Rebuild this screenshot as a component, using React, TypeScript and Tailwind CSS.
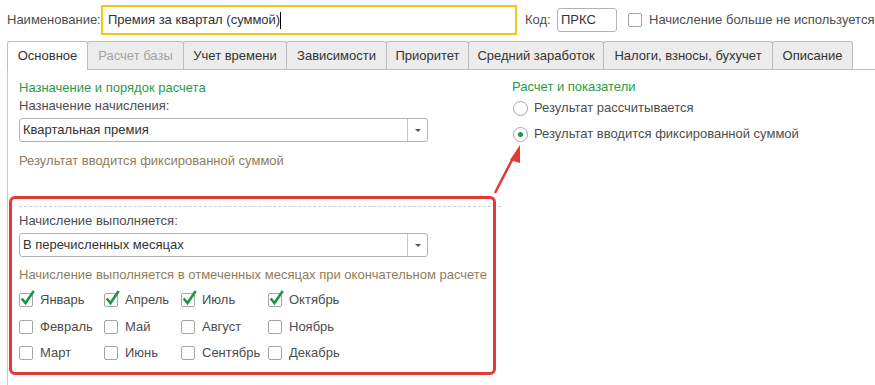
import React from "react";

const TABS = [
  { label: "Основное", w: "w-[81px]", active: true, disabled: false },
  { label: "Расчет базы", w: "w-[97px]", active: false, disabled: true },
  { label: "Учет времени", w: "w-[104px]", active: false, disabled: false },
  { label: "Зависимости", w: "w-[101px]", active: false, disabled: false },
  { label: "Приоритет", w: "w-[83px]", active: false, disabled: false },
  { label: "Средний заработок", w: "w-[136px]", active: false, disabled: false },
  { label: "Налоги, взносы, бухучет", w: "w-[170px]", active: false, disabled: false },
  { label: "Описание", w: "w-[81px]", active: false, disabled: false },
];

// grid fills row by row: Jan, Apr, Jul, Oct / Feb, May, ...
const MONTHS = [
  { name: "Январь", on: true },
  { name: "Апрель", on: true },
  { name: "Июль", on: true },
  { name: "Октябрь", on: true },
  { name: "Февраль", on: false },
  { name: "Май", on: false },
  { name: "Август", on: false },
  { name: "Ноябрь", on: false },
  { name: "Март", on: false },
  { name: "Июнь", on: false },
  { name: "Сентябрь", on: false },
  { name: "Декабрь", on: false },
];

function Checkbox({ checked }: { checked?: boolean }) {
  return (
    <span className="relative block h-[14px] w-[14px] shrink-0 rounded-[2px] border border-[#a6a6a6] bg-white">
      {checked && (
        <svg className="absolute left-0 top-[-4px]" width="15" height="16" viewBox="0 0 15 16">
          <path d="M2.5 9.5 L5.5 13 L13 2" fill="none" stroke="#1e9444" strokeWidth="2.6" strokeLinecap="square" />
        </svg>
      )}
    </span>
  );
}

function Radio({ checked }: { checked?: boolean }) {
  return (
    <span className="flex h-[15px] w-[15px] shrink-0 items-center justify-center rounded-full border border-[#a6a6a6] bg-white">
      {checked && <span className="h-[5px] w-[5px] rounded-full bg-[#1e9444]" />}
    </span>
  );
}

function Select({ value }: { value: string }) {
  return (
    <div className="flex h-[24px] w-[409px] rounded-[3px] border border-[#b3b3b3] bg-white">
      <div className="flex flex-1 items-center pl-[3px] text-[#333]">{value}</div>
      <div className="flex w-[20px] items-center justify-center border-l border-[#c6c6c6]">
        <span className="h-0 w-0 border-x-[3px] border-t-[3px] border-x-transparent border-t-[#555]" />
      </div>
    </div>
  );
}

export default function App() {
  return (
    <div className="relative h-[385px] w-[875px] overflow-hidden bg-white font-['Liberation_Sans',Arial,sans-serif] text-[13px] leading-[16px] text-[#4d4d4d]">
      {/* header row */}
      <div className="mt-[5px] flex h-[30px] items-center pl-[7px]">
        <span className="w-[94px]">Наименование:</span>
        <div className="flex h-[30px] w-[416px] items-center border-2 border-[#f5c518] pl-[5px] text-[#333]">
          Премия за квартал (суммой)
          <span className="h-[17px] w-px bg-black" />
        </div>
        <span className="ml-[8px] w-[32px]">Код:</span>
        <div className="flex h-[24px] w-[60px] items-center rounded-[3px] border border-[#b3b3b3] pl-[3px] text-[#333]">
          ПРКС
        </div>
        <span className="ml-[11px]">
          <Checkbox />
        </span>
        <span className="ml-[7px] whitespace-nowrap">Начисление больше не используется</span>
      </div>

      {/* tabs */}
      <div className="ml-[7px] mt-[7px] flex h-[28px] items-end border-b border-[#bdbdbd]">
        {TABS.map((t, i) => (
          <div
            key={t.label}
            className={
              (i > 0 ? "-ml-px " : "") +
              t.w +
              (t.active
                ? " relative z-10 -mb-px flex h-[29px] items-center justify-center rounded-t-[3px] border border-b-0 border-[#bdbdbd] bg-white pb-px text-[#333]"
                : " flex h-[28px] items-center justify-center rounded-t-[3px] border border-b-0 border-[#bdbdbd] bg-[#ececec]") +
              (t.disabled ? " text-[#a3a3a3]" : t.active ? "" : " text-[#333]")
            }
          >
            {t.label}
          </div>
        ))}
      </div>

      {/* panel */}
      <div className="ml-[7px] flex h-[315px] border-l border-[#c8c8c8]">
        <div className="relative w-[493px] pl-[11px] pt-[10px]">
          <div className="text-[#2a9a48]">Назначение и порядок расчета</div>
          <div className="mt-[2px]">Назначение начисления:</div>
          <div className="mt-[4px]">
            <Select value="Квартальная премия" />
          </div>
          <div className="mt-[11px] text-[#8f7d5a]">Результат вводится фиксированной суммой</div>

          <div className="mt-[37px] w-[482px] border-t border-dashed border-[#cfcfcf]" />
          <div className="mt-[6px]">Начисление выполняется:</div>
          <div className="mt-[4px]">
            <Select value="В перечисленных месяцах" />
          </div>
          <div className="mt-[10px] whitespace-nowrap text-[#8f7d5a]">
            Начисление выполняется в отмеченных месяцах при окончательном расчете
          </div>
          <div className="mt-[4px] grid grid-cols-[85px_77px_87px_120px]">
            {MONTHS.map((m) => (
              <div key={m.name} className="flex h-[26.5px] items-center gap-[7px]">
                <Checkbox checked={m.on} />
                <span>{m.name}</span>
              </div>
            ))}
          </div>

          {/* red annotation frame */}
          <div className="pointer-events-none absolute left-px top-[126px] h-[179px] w-[487px] rounded-[6px] border-[3px] border-[#e53935]" />
        </div>

        <div className="pl-[11px] pt-[9px]">
          <div className="text-[#2a9a48]">Расчет и показатели</div>
          <div className="mt-[3px] flex h-[20px] items-center gap-[6px] pl-px">
            <Radio />
            <span>Результат рассчитывается</span>
          </div>
          <div className="mt-[6px] flex h-[20px] items-center gap-[6px] pl-px">
            <Radio checked />
            <span>Результат вводится фиксированной суммой</span>
          </div>
        </div>
      </div>

      {/* red arrow */}
      <svg className="pointer-events-none absolute left-0 top-0" width="875" height="385">
        <line x1="495" y1="193" x2="513" y2="158" stroke="#e53935" strokeWidth="2.5" />
        <polygon points="520,145 510,160 520,163" fill="#e53935" />
      </svg>
    </div>
  );
}
